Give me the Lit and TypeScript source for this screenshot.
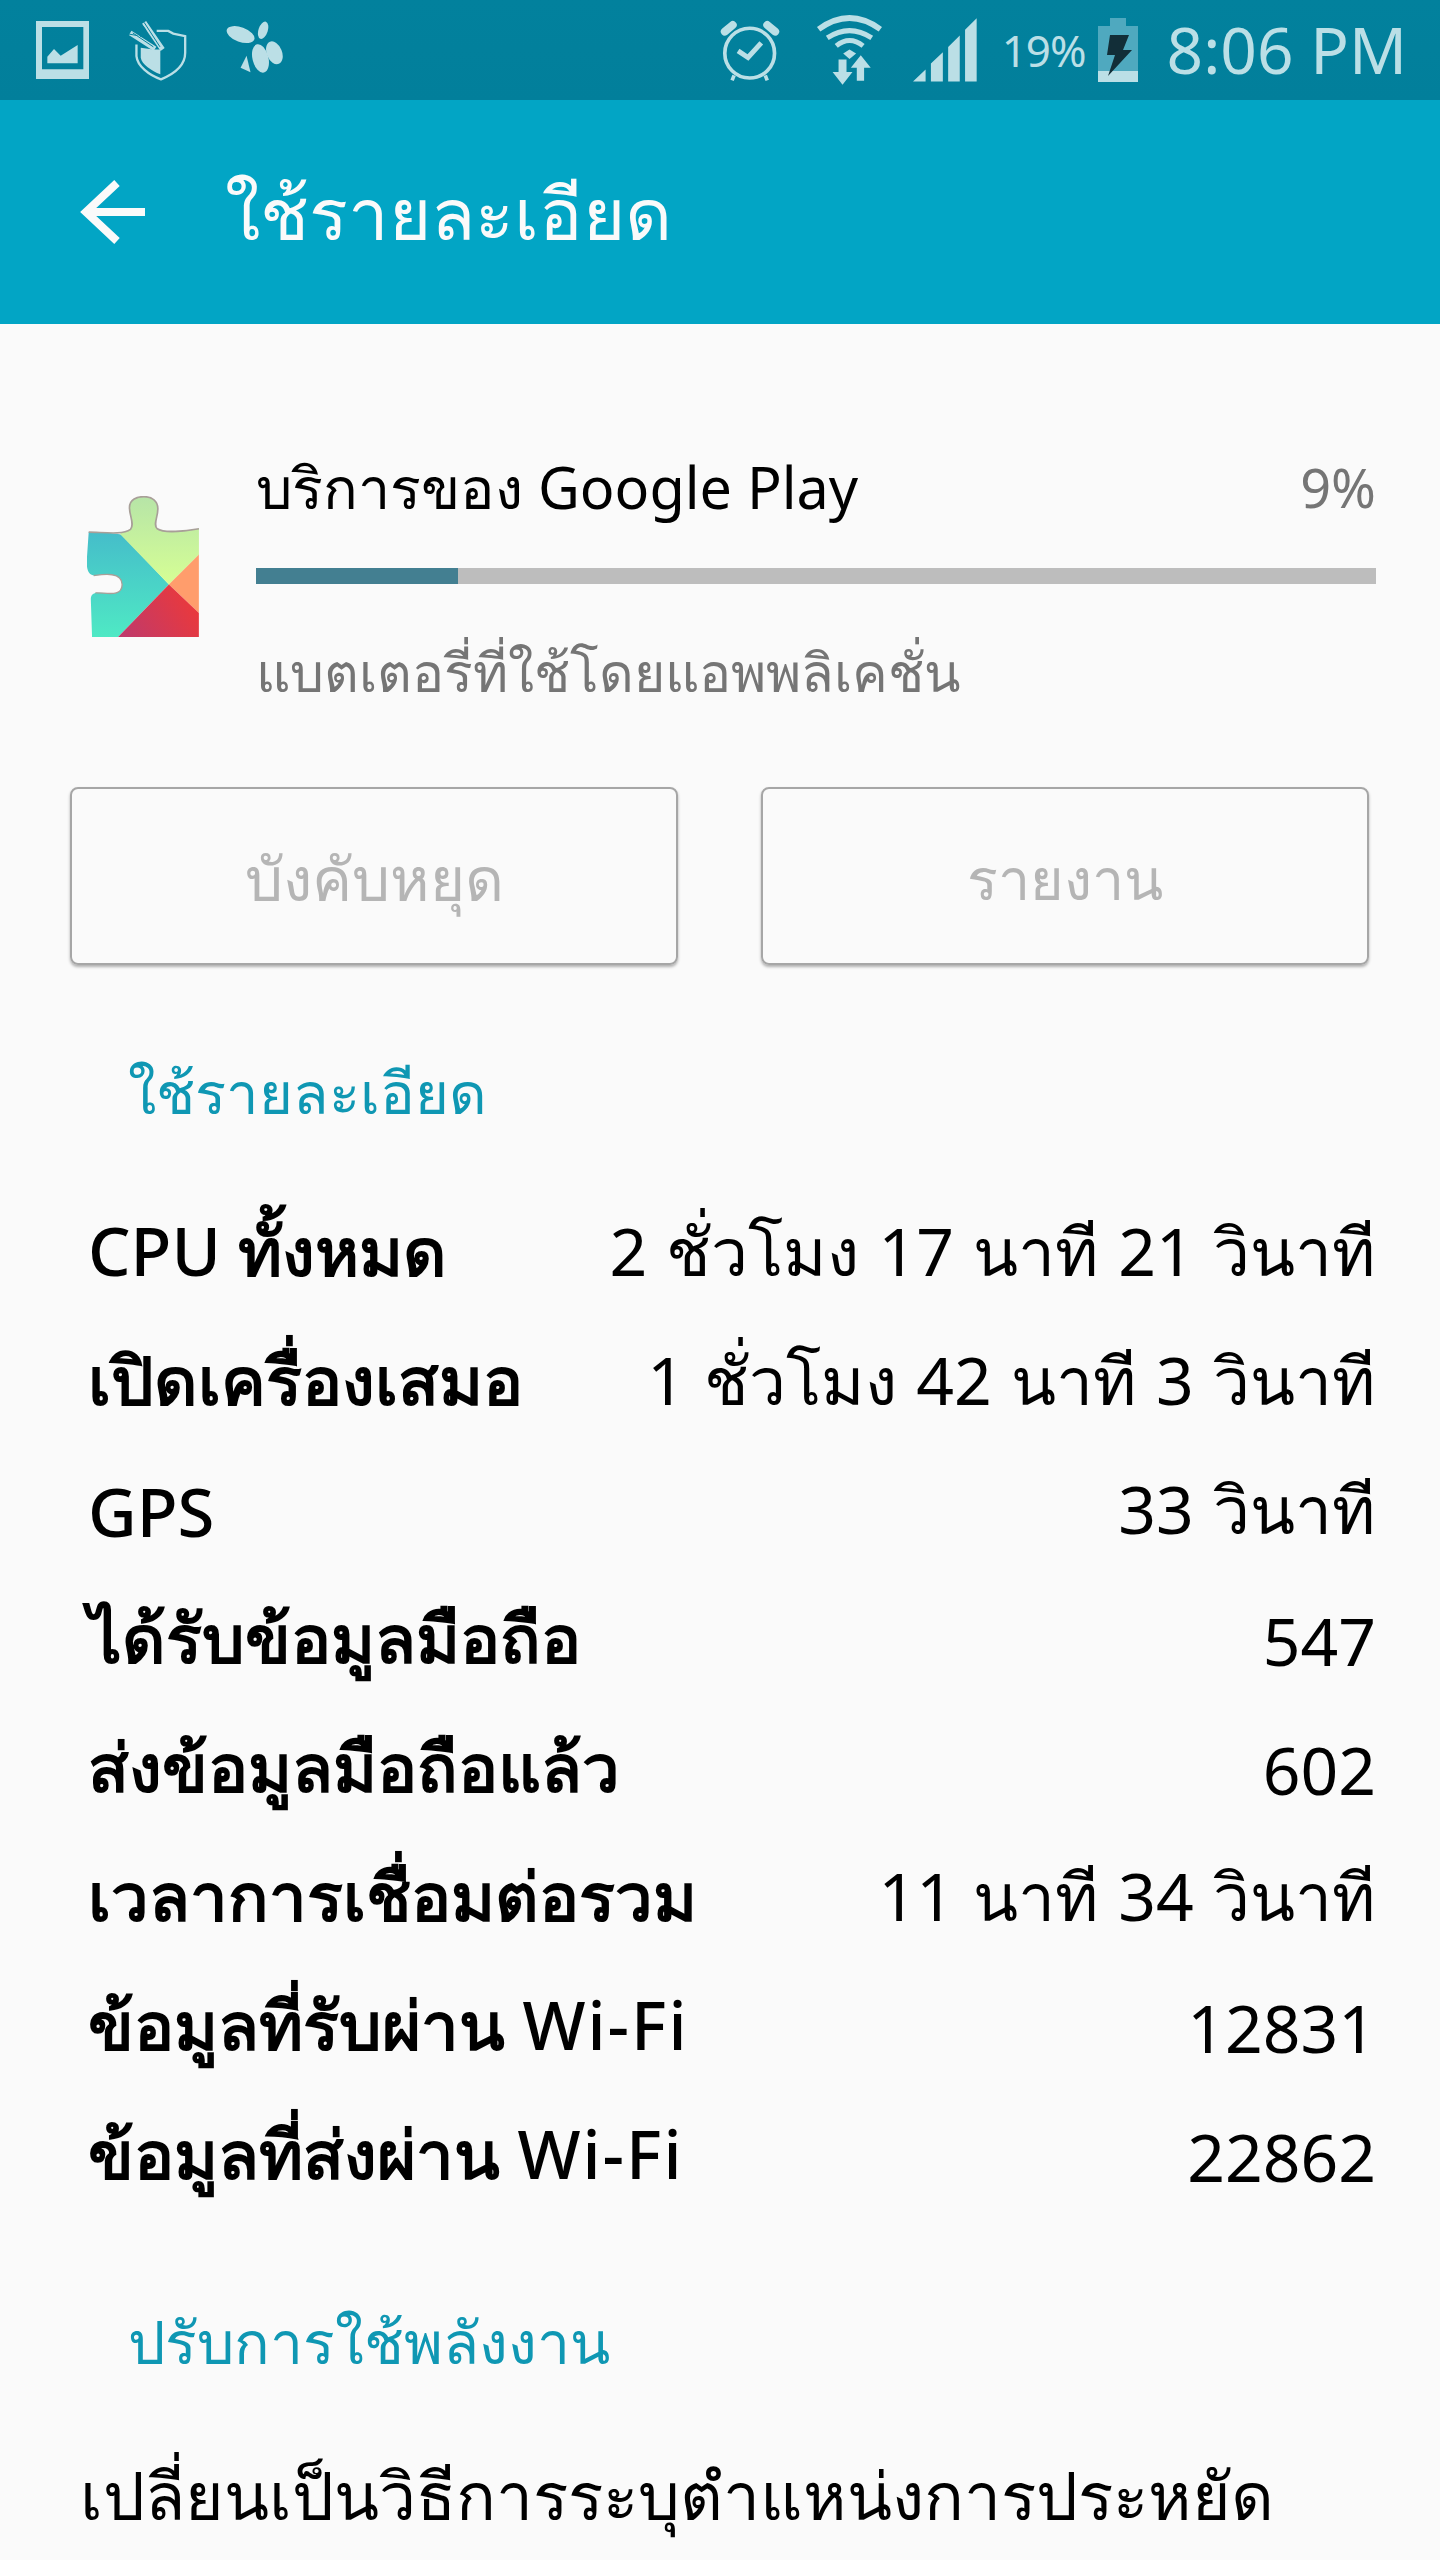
import { LitElement, html, css, svg } from 'lit';
import { customElement } from 'lit/decorators.js';

const ROWS = [
  ['CPU ทั้งหมด', '2 ชั่วโมง 17 นาที 21 วินาที'],
  ['เปิดเครื่องเสมอ', '1 ชั่วโมง 42 นาที 3 วินาที'],
  ['GPS', '33 วินาที'],
  ['ได้รับข้อมูลมือถือ', '547'],
  ['ส่งข้อมูลมือถือแล้ว', '602'],
  ['เวลาการเชื่อมต่อรวม', '11 นาที 34 วินาที'],
  ['ข้อมูลที่รับผ่าน Wi-Fi', '12831'],
  ['ข้อมูลที่ส่งผ่าน Wi-Fi', '22862'],
];

const puzzlePath =
  'M90 248C130 248 190 258 215 240C228 225 212 200 212 175C212 150 235 142 255 142C280 142 297 155 297 178C297 205 282 225 295 238C315 252 380 245 420 238L420 562L100 562L97 470C97 450 92 435 110 430C140 428 190 445 190 405C190 365 130 375 105 378C85 375 82 350 85 320Z';

const puzzle = svg`
  <defs>
    <clipPath id="pz"><path d=${puzzlePath} /></clipPath>
    <linearGradient id="pt" x1="0" y1="0" x2="0" y2="1"><stop offset="0" stop-color="#45bcca"/><stop offset="1" stop-color="#4feac4"/></linearGradient>
    <linearGradient id="pg" x1="0" y1="0" x2="0" y2="1"><stop offset="0" stop-color="#b5e3a8"/><stop offset="1" stop-color="#d6ff94"/></linearGradient>
    <linearGradient id="pr" x1="0" y1="1" x2="1" y2="0.6"><stop offset="0" stop-color="#bb3a70"/><stop offset="1" stop-color="#e8393e"/></linearGradient>
  </defs>
  <g clip-path="url(#pz)">
    <polygon points="80,240 188,255 330,405 170,570 80,570" fill="url(#pt)"/>
    <polygon points="188,130 430,130 420,315 330,405 185,255" fill="url(#pg)"/>
    <polygon points="420,315 330,405 420,490" fill="#ff9d6c"/>
    <polygon points="330,405 420,490 420,570 170,570" fill="url(#pr)"/>
  </g>
  <path d="M90 248C130 248 190 258 215 240C228 225 212 200 212 175C212 150 235 142 255 142C280 142 297 155 297 178C297 205 282 225 295 238C315 252 380 245 420 238" fill="none" stroke="#a89f98" stroke-width="5"/>
  <path d="M105 378C130 375 190 365 190 405C190 445 140 428 110 430" fill="none" stroke="#a89f98" stroke-width="4"/>
`;

// keep latin words lighter, the thai around them is the heavy part
const keyParts = (k: string) =>
  k.split(/([A-Za-z-]+)/).map((p) => {
    if (!/[A-Za-z]/.test(p)) return p;
    return html`<span class=${p === 'Wi-Fi' ? 'latin wifi-word' : 'latin'}>${p}</span>`;
  });

@customElement('app-root')
export class AppRoot extends LitElement {
  static styles = css`
    :host {
      display: block;
      width: 1440px;
      height: 2560px;
      overflow: hidden;
      background: #fafafa;
      font-family: 'Noto Sans', 'DejaVu Sans', sans-serif;
      color: #000;
    }
    .status {
      height: 100px;
      background: linear-gradient(#02819d, #027f9b);
      color: #bbdfe6;
      display: flex;
      align-items: center;
      padding: 0 33px 0 36px;
      box-sizing: border-box;
    }
    .status svg { display: block; flex: none; }
    .shield { margin-left: 37px; }
    .bee { margin: 0 0 6px 39px; }
    .wifi { margin-left: 36px; }
    .signal { margin-left: 30px; }
    .status .spacer { flex: 1; }
    .pct { font-size: 44px; letter-spacing: -1px; margin: 0 12px 0 25px; }
    .time { font-size: 64px; margin-left: 29px; line-height: 1; }
    .toolbar {
      height: 224px;
      background: #02a5c5;
      color: #fafafa;
      display: flex;
      align-items: center;
      padding-left: 80px;
    }
    .toolbar h1 {
      margin: 0 0 0 80px;
      font-size: 72.5px;
      font-weight: 400;
      line-height: 1;
    }
    .app {
      display: flex;
      padding: 140px 64px 0 87px;
    }
    .app > svg { flex: none; margin-top: 32px; }
    .app-main { flex: 1; margin-left: 57px; }
    .app-top {
      display: flex;
      justify-content: space-between;
      font-size: 57.5px;
      line-height: 70px;
      height: 70px;
      margin-top: -12px;
    }
    .app-top .pct-app { color: #757575; font-size: 54px; }
    .bar {
      height: 16px;
      background: #bdbdbd;
      margin-top: 46px;
    }
    .bar div { height: 100%; background: #437f91; }
    .sub {
      margin-top: 53px;
      font-size: 53.5px;
      line-height: 70px;
      color: #757575;
    }
    .buttons {
      display: flex;
      gap: 83px;
      padding: 80px 0 0 70px;
    }
    .btn {
      width: 608px;
      height: 178px;
      box-sizing: border-box;
      border: 2px solid #a6a6a6;
      border-radius: 8px;
      box-shadow: 0 2px 3px rgba(0, 0, 0, 0.3);
      display: flex;
      align-items: center;
      justify-content: center;
      padding-top: 6px;
      font-size: 60px;
      color: #b5b5b5;
    }
    .btn.report { font-size: 57.5px; }
    .section {
      margin: 0;
      padding-left: 128px;
      color: #0f97b3;
      font-size: 59px;
      font-weight: 400;
      line-height: 80px;
    }
    .s1 { margin-top: 87px; font-size: 58px; }
    .rows { padding: 56px 64px 0 88px; }
    .row {
      display: flex;
      justify-content: space-between;
      height: 129px;
      align-items: center;
      font-size: 66px;
      word-spacing: 2px;
      white-space: nowrap;
    }
    .row .k { font-weight: 700; font-size: 67px; word-spacing: 0; }
    .row .latin { font-weight: 500; }
    .row .wifi-word { letter-spacing: 2px; }
    .s2 { margin-top: 81px; }
    .para {
      margin: 66px 64px 0 80px;
      font-size: 66px;
      line-height: 94px;
    }
  `;

  render() {
    return html`
      <div class="status">
        <svg width="53" height="58" viewBox="48 18 159 174" fill="#bbdfe6"><path fill-rule="evenodd" d="M48 18H207V192H48ZM66 36V163H190V36Z"/><path d="M82 145V125L102 102L122 122L173 90V145Z"/></svg>
        <svg class="shield" width="61" height="62" viewBox="318 8 183 187">
          <path fill="none" stroke="#bbdfe6" stroke-width="7" d="M349 85V120C352 150 387 178 423 190C460 175 496 150 496 110V60L460 52L445 44H410"/>
          <path fill="#bbdfe6" d="M362 95V125C365 145 395 165 421 175V100L400 100Z"/>
          <path fill="none" stroke="#bbdfe6" stroke-width="15" d="M372 18L428 100M330 50L405 98"/>
          <path fill="none" stroke="#02819d" stroke-width="3" d="M372 18L420 92M338 50L400 92M360 18L378 42M388 10L398 36M318 52L352 58M350 30L362 62"/>
        </svg>
        <svg class="bee" width="58" height="53" viewBox="618 18 175 158" fill="#bbdfe6">
          <ellipse cx="662" cy="58" rx="44" ry="22" transform="rotate(20 662 58)"/>
          <ellipse cx="730" cy="45" rx="14" ry="27" transform="rotate(18 730 45)"/>
          <ellipse cx="764" cy="113" rx="23" ry="36" transform="rotate(-22 764 113)"/>
          <ellipse cx="722" cy="130" rx="24" ry="44" transform="rotate(-14 722 130)"/>
          <path d="M680 122L692 172L662 158Z"/>
        </svg>
        <div class="spacer"></div>
        <svg width="60" height="63" viewBox="24 12 180 190">
          <g fill="none" stroke="#bbdfe6">
            <ellipse cx="113" cy="115" rx="75" ry="75" stroke-width="11"/>
            <path stroke-width="15" d="M78 108L108 128L148 84"/>
            <path stroke-width="24" stroke-linecap="round" d="M38 50L62 30M190 50L166 30"/>
            <path stroke-width="11" d="M66 182L60 197M160 182L166 197"/>
          </g>
        </svg>
        <svg class="wifi" width="67" height="71" viewBox="310 0 202 212">
          <g fill="none" stroke="#bbdfe6">
            <path stroke-width="17" d="M318 42Q411 -26 504 42"/>
            <path stroke-width="15" d="M344 68Q411 24 478 68"/>
            <path stroke-width="15" d="M371 92Q411 60 452 92"/>
          </g>
          <g fill="#bbdfe6">
            <path d="M392 115L411 103L431 115L411 132Z"/>
            <path d="M378 133H402V171H420L390 209L360 171H378Z"/>
            <path d="M445 120L475 158H455V197H433V158H415Z"/>
          </g>
        </svg>
        <svg class="signal" width="64" height="64" viewBox="603 10 193 192" fill="#bbdfe6">
          <path d="M603 201L641 165V201ZM657 201V147L693 113V201ZM709 201V97L744 62V201ZM760 201V45L795 10V201Z"/>
        </svg>
        <span class="pct">19%</span>
        <svg width="40" height="64" viewBox="0 0 40 64">
          <rect x="12" width="16" height="9" fill="#4fa9bf"/>
          <rect y="8" width="40" height="46" fill="#4fa9bf"/>
          <rect y="53" width="40" height="11" fill="#bbdfe6"/>
          <path fill="#122e38" d="M12 17H31L25 32H34L10 58L17 37H9Z"/>
        </svg>
        <span class="time">8:06 PM</span>
      </div>
      <div class="toolbar">
        <svg width="65" height="64" viewBox="0 0 65 64"><path fill="none" stroke="#fafafa" stroke-width="8" d="M65 32H6M37 3L6 32L37 61"/></svg>
        <h1>ใช้รายละเอียด</h1>
      </div>
      <div class="app">
        <svg width="112" height="142" viewBox="85 140 335 425">${puzzle}</svg>
        <div class="app-main">
          <div class="app-top"><span>บริการของ Google Play</span><span class="pct-app">9%</span></div>
          <div class="bar"><div style="width: ${(202 / 1120) * 100}%"></div></div>
          <div class="sub">แบตเตอรี่ที่ใช้โดยแอพพลิเคชั่น</div>
        </div>
      </div>
      <div class="buttons">
        <div class="btn">บังคับหยุด</div>
        <div class="btn report">รายงาน</div>
      </div>
      <h2 class="section s1">ใช้รายละเอียด</h2>
      <div class="rows">
        ${ROWS.map(([k, v]) => html`<div class="row"><span class="k">${keyParts(k)}</span><span>${v}</span></div>`)}
      </div>
      <h2 class="section s2">ปรับการใช้พลังงาน</h2>
      <p class="para">เปลี่ยนเป็นวิธีการระบุตำแหน่งการประหยัดพลังงาน</p>
    `;
  }
}
